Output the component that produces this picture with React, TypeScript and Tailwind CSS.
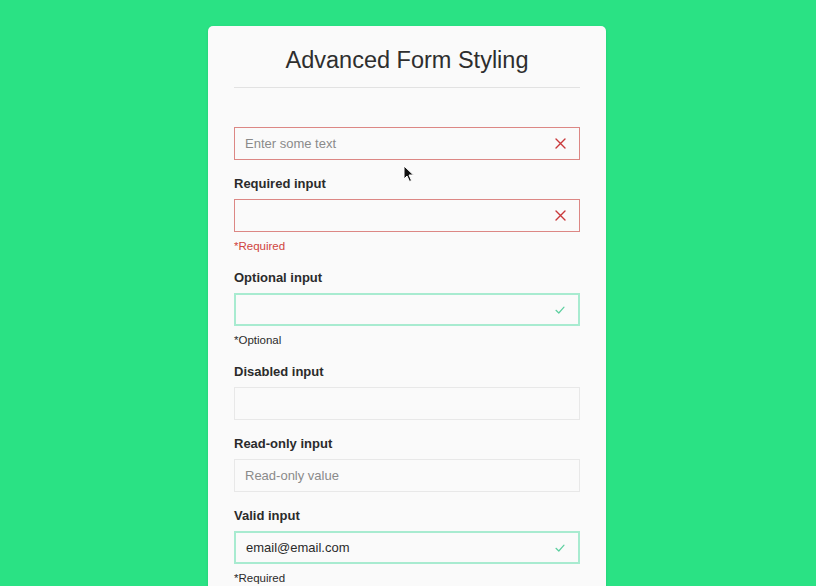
const font = { fontFamily: '"Liberation Sans", Arial, Helvetica, sans-serif' };

const XIcon = () => (
	<svg width="11" height="11" viewBox="0 0 11 11" fill="none" stroke="#c9383a" strokeWidth="1.4" strokeLinecap="round">
		<path d="M1 1 L10 10 M10 1 L1 10" />
	</svg>
);

const CheckIcon = () => (
	<svg width="10" height="8" viewBox="0 0 10 8" fill="none" stroke="#5ccf9f" strokeWidth="1.2" strokeLinecap="round" strokeLinejoin="round">
		<path d="M1 4.3 L3.8 7 L9 1.2" />
	</svg>
);

type FieldProps = {
	label?: string;
	state?: "error" | "valid" | "plain";
	value?: string;
	placeholder?: string;
	helper?: string;
	helperRed?: boolean;
};

const Field = ({ label, state = "plain", value, placeholder, helper, helperRed }: FieldProps) => {
	const border =
		state === "error"
			? "border border-[#dc8784]"
			: state === "valid"
				? "border-2 border-[#a8ebd0]"
				: "border-[1.5px] border-[#e8e8e8]";
	return (
		<div className="flex flex-col">
			{label && <label className="mb-[5px] text-[13px] leading-5 font-bold text-[#2b2b2b]">{label}</label>}
			<div className={`flex h-[33px] items-center justify-between ${border} bg-[#fafafa] pl-[10px] pr-[13px]`}>
				<span className={`text-[13px] ${value ? "text-[#2b2b2b]" : "text-[#8a8a8a]"}`}>{value ?? placeholder ?? ""}</span>
				{state === "error" && <XIcon />}
				{state === "valid" && <CheckIcon />}
			</div>
			{helper && (
				<div className={`mt-[6px] text-[11.5px] leading-4 ${helperRed ? "text-[#d0443e]" : "text-[#2b2b2b]"}`}>{helper}</div>
			)}
		</div>
	);
};

export default function App() {
	return (
		<div className="min-h-[586px] w-full bg-[#2ae284] pt-[26px]" style={font}>
			<div className="relative ml-[208px] w-[398px] rounded-t-[5px] bg-[#fafafa] px-[26px] pt-[18px] pb-10 shadow-sm">
				<h1 className="text-center text-[23.5px] leading-8 text-[#2e2e2e]">Advanced Form Styling</h1>
				<div className="mt-[11px] h-px bg-[#e2e2e2]" />
				<div className="mt-[39px] flex flex-col gap-[14px]">
					<Field state="error" placeholder="Enter some text" />
					<Field label="Required input" state="error" helper="*Required" helperRed />
					<Field label="Optional input" state="valid" helper="*Optional" />
					<Field label="Disabled input" />
					<Field label="Read-only input" placeholder="Read-only value" />
					<Field label="Valid input" state="valid" value="email@email.com" helper="*Required" />
				</div>
				<svg className="absolute left-[195px] top-[139px]" width="12" height="18" viewBox="0 0 12 18">
					<path d="M1 1 L1 14 L4 11 L6.5 16.5 L8.5 15.5 L6 10 L10.5 10 Z" fill="#111" stroke="#fff" strokeWidth="1" />
				</svg>
			</div>
		</div>
	);
}
